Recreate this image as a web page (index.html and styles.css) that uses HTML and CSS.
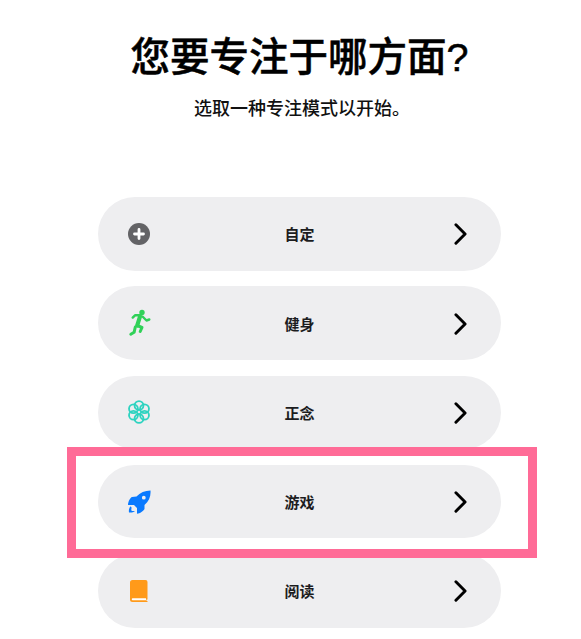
FILE: index.html
```html
<!DOCTYPE html>
<html lang="zh-CN">
<head>
    <meta charset="UTF-8">
    <meta name="viewport" content="width=device-width, initial-scale=1.0">
    <title>专注模式</title>
    <link rel="stylesheet" href="styles.css">
</head>
<body>
    <main class="page">
        <h1 class="title">您要专注于哪方面?</h1>
        <p class="subtitle">选取一种专注模式以开始。</p>

        <div class="focus-list">
            <div class="focus-row">
                <svg class="focus-icon" viewBox="0 0 24 24">
                    <circle cx="12" cy="12" r="11" fill="#636366"/>
                    <path d="M12 7.500v9M7.500 12h9" stroke="#fff" stroke-width="2.800" stroke-linecap="round"/>
                </svg>
                <span class="focus-label">自定</span>
                <svg class="chevron" viewBox="0 0 14 24"><path d="M2 2l10 10L2 22"/></svg>
            </div>
            <div class="focus-row">
                <svg class="focus-icon tall" viewBox="0 0 24 28">
                    <circle cx="15" cy="3.400" r="2.700" fill="#30d158"/>
                    <g fill="none" stroke="#30d158" stroke-linecap="round" stroke-linejoin="round">
                        <path stroke-width="2.400" d="M5.700 8.600L8 6.300h5.500"/>
                        <path stroke-width="2.400" d="M15.500 7.500l4 4 2.800-1"/>
                        <path stroke-width="4.200" d="M13 7.500l-2.800 9"/>
                        <path stroke-width="3" d="M10.200 16.500l4.800 2-1.800 4"/>
                        <path stroke-width="3" d="M8.300 18l-1.200 5.300-3.300 1.900"/>
                    </g>
                </svg>
                <span class="focus-label">健身</span>
                <svg class="chevron" viewBox="0 0 14 24"><path d="M2 2l10 10L2 22"/></svg>
            </div>
            <div class="focus-row">
                <svg class="focus-icon" viewBox="0 0 26 26">
                    <g fill="none" stroke="#2ed3c0" stroke-width="2">
                        <circle cx="13" cy="6" r="4.800"/>
                        <circle cx="19" cy="9.500" r="4.800"/>
                        <circle cx="19" cy="16.500" r="4.800"/>
                        <circle cx="13" cy="20" r="4.800"/>
                        <circle cx="7" cy="16.500" r="4.800"/>
                        <circle cx="7" cy="9.500" r="4.800"/>
                    </g>
                </svg>
                <span class="focus-label">正念</span>
                <svg class="chevron" viewBox="0 0 14 24"><path d="M2 2l10 10L2 22"/></svg>
            </div>
            <div class="focus-row">
                <svg class="focus-icon" viewBox="0 0 24 24">
                    <path fill="#0a7aff" fill-rule="evenodd" d="M23.500 .5C18 .5 13 2.500 9.500 6.500L5 7C3.500 7.500 1.200 11 1 15L7 15 10 18 10 23.800C13 23.500 16.500 21 17.500 19L17.500 15C22 11 24 6 23.500 .5zM16.800 5.800a1.900 1.900 0 1 0 0 3.800 1.900 1.900 0 0 0 0-3.800z"/>
                    <path fill="#0a7aff" d="M3.200 16.500c-1.200 1.800-1.600 4-1.200 6 2.200.3 4.400-.1 6-1.400-.6-.3-1.400-.2-2.200-.1-1 .1-1.600-.4-1.500-1.500.1-.9.400-1.600 0-2.400z"/>
                </svg>
                <span class="focus-label">游戏</span>
                <svg class="chevron" viewBox="0 0 14 24"><path d="M2 2l10 10L2 22"/></svg>
            </div>
            <div class="focus-row">
                <svg class="focus-icon" viewBox="0 0 24 24">
                    <path fill="#ff9a1a" d="M5.500 1h13a2 2 0 0 1 2 2v17.500h-1v1.500h1V23H5.500A2.500 2.500 0 0 1 3 20.500V3.500A2.500 2.500 0 0 1 5.500 1z"/>
                    <path fill="#fff" d="M5.700 19.300h13.300v1.900H5.700a.95.95 0 0 1 0-1.900z"/>
                </svg>
                <span class="focus-label">阅读</span>
                <svg class="chevron" viewBox="0 0 14 24"><path d="M2 2l10 10L2 22"/></svg>
            </div>
        </div>

        <div class="highlight"></div>
    </main>
</body>
</html>
```

FILE: styles.css
```css
html, body {
    margin: 0;
    padding: 0;
    background-color: #fff;
}
body {
    font-family: "Liberation Sans", "Noto Sans CJK SC", sans-serif;
    color: #000;
    height: 639px;
    overflow: hidden;
}
.page {
    position: relative;
    width: 403px;
    margin-left: 98px;
    padding-top: 29px;
}
.title {
    margin: 0;
    font-size: 39.5px;
    line-height: 56px;
    font-weight: 500;
    -webkit-text-stroke: 0.5px #000;
    text-align: center;
    white-space: nowrap;
}
.subtitle {
    margin: 11px 0 0;
    padding-left: 5px;
    font-size: 18px;
    line-height: 26px;
    font-weight: 500;
    text-align: center;
    color: #111;
}
.focus-list {
    display: flex;
    flex-direction: column;
    gap: 15.8px;
    margin-top: 75px;
}
.focus-row {
    display: grid;
    grid-template-columns: 1fr auto 1fr;
    align-items: center;
    height: 73.5px;
    padding: 0 34px;
    box-sizing: border-box;
    border-radius: 37px;
    background-color: #eeeef0;
}
.focus-icon {
    width: 24px;
    height: 24px;
    margin-left: -5px;
}
.focus-icon.tall {
    height: 28px;
}
.focus-label {
    font-size: 15px;
    font-weight: 700;
    color: #1c1c1e;
}
.chevron {
    justify-self: end;
    width: 13px;
    height: 22px;
    margin-top: 1px;
    fill: none;
    stroke: #000;
    stroke-width: 3.200;
    stroke-linecap: round;
    stroke-linejoin: round;
}
.highlight {
    position: absolute;
    left: -31px;
    top: 447px;
    width: 470px;
    height: 111px;
    box-sizing: border-box;
    border: 9px solid #ff6b97;
}
```
